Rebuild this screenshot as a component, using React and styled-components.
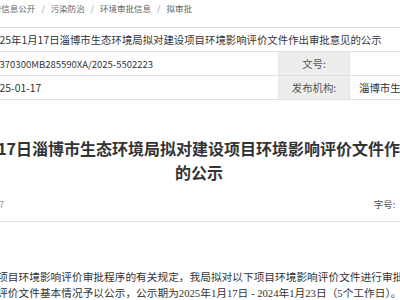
import React from "react";
import styled, { createGlobalStyle } from "styled-components";

const GlobalStyle = createGlobalStyle`
  html, body { margin: 0; padding: 0; background: #fff; overflow: hidden; }
  body {
    font-family: "Noto Sans CJK SC", "Noto Sans", sans-serif;
    color: #333;
  }
`;

const Page = styled.div`
  width: 1000px;
  margin-left: -300px;
`;

const Breadcrumb = styled.nav`
  display: flex;
  align-items: center;
  height: 16px;
  margin-left: 252px;
  font-size: 8.5px;
  line-height: 16px;
  color: #666;
  white-space: nowrap;
`;

const Crumb = styled.span``;

const Sep = styled.span`
  margin: 0 6px;
  color: #999;
`;

const InfoTable = styled.div`
  display: grid;
  grid-template-columns: 80px 309px 71px 160px;
  width: 620px;
  margin: 11px 0 0 190px;
  border-top: 1px solid #dcdcdc;
  font-size: 10.4px;
`;

const Cell = styled.div`
  height: 24px;
  box-sizing: border-box;
  display: flex;
  align-items: center;
  white-space: nowrap;
  overflow: hidden;
  grid-column: span ${(p) => p.$span || 1};
  border-bottom: 1px solid #e0e0e0;
  border-right: 1px solid #e6e6e6;
  background: ${(p) => (p.$label ? "#ededed" : "#fff")};
  justify-content: ${(p) => (p.$label ? "center" : "flex-start")};
  padding-left: ${(p) => (p.$pad != null ? p.$pad : 0)}px;
  color: ${(p) => (p.$label ? "#555" : "#333")};
`;

const Code = styled.span`
  font-size: 9.5px;
`;

const Title = styled.h1`
  width: 576px;
  margin: 36px 0 0 211px;
  font-size: 16px;
  line-height: 24px;
  font-weight: 700;
  text-align: center;
  color: #333;
`;

const MetaBar = styled.div`
  padding: 10px 0 7px;
  border-bottom: 1px solid #e2e2e2;
`;

const MetaInner = styled.div`
  display: flex;
  justify-content: space-between;
  margin-left: 208px;
  width: 534px;
  line-height: 20px;
  font-size: 9.5px;
  white-space: nowrap;
`;

const MetaDate = styled.span`
  color: #999;
`;

const FontSize = styled.span`
  color: #555;
`;

const SizeLink = styled.span`
  margin-left: 6px;
  color: #555;
`;

const Article = styled.div`
  margin: 47px 0 0 233px;
  width: 528px;
`;

const Para = styled.p`
  margin: 0;
  font-family: "Liberation Serif", "Noto Sans CJK SC", serif;
  font-size: 10.7px;
  line-height: 16px;
  text-indent: 2em;
  color: #333;
`;

const crumbs = ["首页", "政府信息公开", "污染防治", "环境审批信息", "拟审批"];

export default function App() {
  return (
    <>
      <GlobalStyle />
      <Page>
        <Breadcrumb>
          {crumbs.map((c, i) => (
            <React.Fragment key={c}>
              {i > 0 && <Sep>/</Sep>}
              <Crumb>{c}</Crumb>
            </React.Fragment>
          ))}
        </Breadcrumb>

        <InfoTable>
          <Cell $label>标　题:</Cell>
          <Cell $span={3} $pad={18}>
            2025年1月17日淄博市生态环境局拟对建设项目环境影响评价文件作出审批意见的公示
          </Cell>
          <Cell $label>索引号:</Cell>
          <Cell $pad={19}>
            <Code>11370300MB285590XA/2025-5502223</Code>
          </Cell>
          <Cell $label>文号:</Cell>
          <Cell $pad={9}></Cell>
          <Cell $label>发布日期:</Cell>
          <Cell $pad={18}>2025-01-17</Cell>
          <Cell $label>发布机构:</Cell>
          <Cell $pad={9}>淄博市生态环境局</Cell>
        </InfoTable>

        <Title>
          2025年1月17日淄博市生态环境局拟对建设项目环境影响评价文件作出审批意见的公示
        </Title>

        <MetaBar>
          <MetaInner>
            <MetaDate>发布日期：2025-01-17</MetaDate>
            <FontSize>
              字号:
              <SizeLink>大</SizeLink>
              <SizeLink>中</SizeLink>
              <SizeLink>小</SizeLink>
            </FontSize>
          </MetaInner>
        </MetaBar>

        <Article>
          <Para>
            根据建设项目环境影响评价审批程序的有关规定，我局拟对以下项目环境影响评价文件进行审批。现将拟审批的环境影响评价文件基本情况予以公示，公示期为2025年1月17日 - 2024年1月23日（5个工作日）。
          </Para>
        </Article>
      </Page>
    </>
  );
}
